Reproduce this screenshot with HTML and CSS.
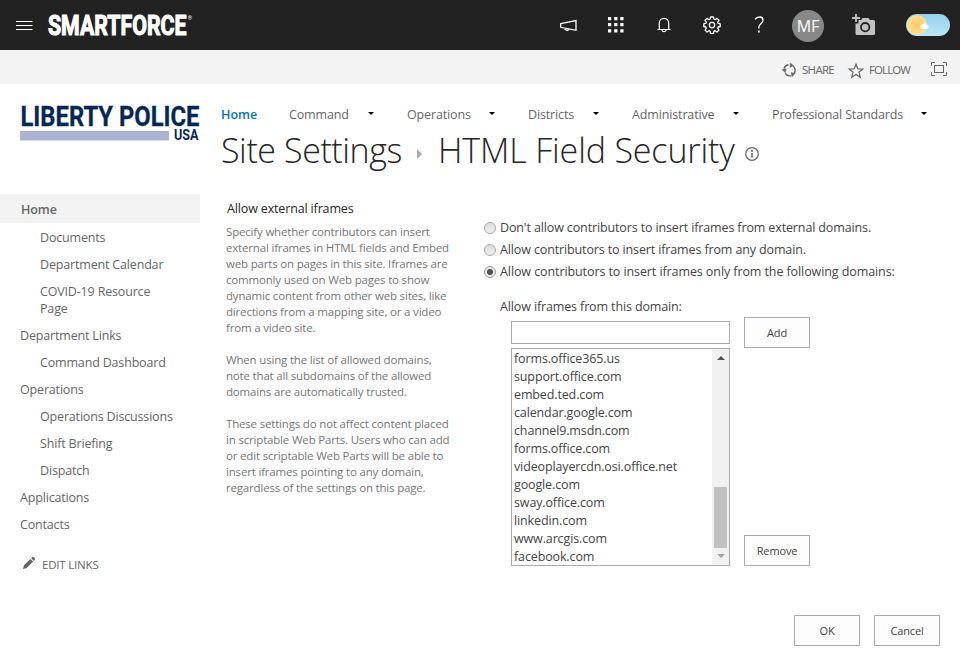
FILE: index.html
```html
<!DOCTYPE html>
<html lang="en">
<head>
<meta charset="utf-8">
<title>HTML Field Security</title>
<link rel="stylesheet" href="styles.css">
</head>
<body>
<header class="topbar">
  <svg class="menu" width="17" height="11" viewBox="0 0 17 11"><path d="M0 1.500h16.500M0 5.500h16.500M0 9.500h16.500" stroke="#fff"/></svg>
  <svg class="brand" width="146" height="26" viewBox="0 0 146 26"><text x="0" y="22" textLength="138.500" lengthAdjust="spacingAndGlyphs" class="brand-text">SMARTFORCE</text><text x="139.800" y="6.500" class="brand-mark">®</text></svg>
  <nav class="tools">
    <svg class="t-horn" width="18" height="14" viewBox="0 0 18 14" fill="none" stroke="#fff" stroke-width="1.300"><path d="M.700 4.700 16 1.500v9.800L.700 8.300zM4.500 9.200c.2 2.600 4.500 2.600 4.800.8"/></svg>
    <svg class="t-grid" width="16" height="16" viewBox="0 0 16 16" fill="#fff"><path d="M0 0h3.200v3.200H0zM6.200 0h3.200v3.200H6.200zM12.300 0h3.200v3.200h-3.200zM0 6h3.200v3.200H0zM6.200 6h3.200v3.200H6.200zM12.300 6h3.200v3.200h-3.200zM0 12.200h3.200v3.200H0zM6.200 12.200h3.200v3.200H6.200zM12.300 12.200h3.200v3.200h-3.200z"/></svg>
    <svg class="t-bell" width="14" height="16" viewBox="0 0 14 16" fill="none" stroke="#fff" stroke-width="1.200"><path d="M.5 12.500h13M2.300 12.500V6a4.700 4.700 0 0 1 9.400 0v6.500M5 13c.3 2.300 3.700 2.300 4 0"/></svg>
    <svg class="t-gear" width="18" height="18" viewBox="0 0 18 18" fill="none" stroke="#fff" stroke-width="1.300" stroke-linejoin="round"><path d="M7.500 1h3l.4 2.200 1.200.5L14 2.400 16 4.300l-1.300 1.900.5 1.200 2 .4v2.700l-2 .5-.5 1.200 1.200 1.900-1.900 1.900-1.900-1.300-1.200.5-.4 2.100h-3l-.4-2.100-1.200-.5-1.900 1.300-1.900-1.900 1.200-1.900-.5-1.200-2-.5V7.800l2-.4.500-1.200L2 4.300l2-1.900 1.900 1.300 1.200-.5z"/><circle cx="9" cy="9.100" r="2.700"/></svg>
    <svg class="t-help" width="12" height="18" viewBox="0 0 12 18" fill="none" stroke="#fff" stroke-width="1.400"><path d="M1 3.300C3.500.2 9 .1 9 4.200c0 3.600-4.200 3.600-4.200 7.300v1"/><path d="M4 15.500h1.700" stroke-width="1.800"/></svg>
    <span class="avatar">MF</span>
    <svg class="t-cam" width="24" height="23" viewBox="0 0 24 23"><path d="M3.500 9.500H6.500V6H9l1.700-2h5.600l1.700 2h3.500Q23 6 23 7.500v12Q23 21 21.500 21H5q-1.500 0-1.500-1.500z" fill="#c2c2c2"/><circle cx="13.200" cy="13.200" r="4.200" fill="none" stroke="#222" stroke-width="1.800"/><path d="M4 0v8M0 4h8" stroke="#c2c2c2" stroke-width="1.800"/></svg>
    <span class="weather">
      <svg width="44" height="22" viewBox="0 0 44 22"><defs><radialGradient id="sun"><stop offset="0" stop-color="#ffc65b"/><stop offset="1" stop-color="#ffe09a"/></radialGradient><linearGradient id="sky" x2="0" y2="1"><stop offset="0" stop-color="#93d1ef"/><stop offset="1" stop-color="#bce7f8"/></linearGradient></defs><rect width="44" height="22" rx="11" fill="url(#sky)"/><circle cx="11" cy="11" r="10" fill="url(#sun)"/><path d="M16 15a2 2 0 0 1-.3-3.900 3 3 0 0 1 5-.7 2.400 2.400 0 0 1 .3 4.600z" fill="#fff"/></svg>
    </span>
  </nav>
</header>
<div class="ribbon">
  <svg class="r-share" width="15" height="15" viewBox="0 0 15 15" fill="none" stroke="#666" stroke-width="1.400"><path d="M2 5.500A5.600 5.600 0 0 1 6.500 1.800M10.500 2.500a5.600 5.600 0 0 1 1.600 8M9.500 12.600A5.600 5.600 0 0 1 3.300 10.500"/><path d="M8.200 0 11.200 2.300 8.200 4.500zM9 9.500l4 1-2.800 3zM0 6.500l4-.7-.7 4z" fill="#666"  stroke-width=".5"/></svg>
  <span class="r-text share-label">SHARE</span>
  <svg class="r-star" width="16" height="16" viewBox="0 0 16 16" fill="none" stroke="#666" stroke-width="1.200"><path d="m8 1.200 1.900 4.600 5 .2-3.900 3.300 1.300 5L8 11.500l-4.300 2.800 1.300-5L1.100 6l5-.2z"/></svg>
  <span class="r-text follow-label">FOLLOW</span>
  <svg class="r-focus" width="16" height="14" viewBox="0 0 16 14" fill="none" stroke="#666"><path d="M.5 4V.5H4M12 .5h3.500V4M15.500 10v3.500H12M4 13.500H.5V10"/><rect x="3.500" y="3.500" width="9" height="7"/></svg>
</div>
<div class="page">
  <aside class="side">
    <svg class="logo" width="180" height="38" viewBox="0 0 180 38"><text x="0.500" y="21.500" textLength="179" lengthAdjust="spacingAndGlyphs" class="logo-main">LIBERTY POLICE</text><rect y="27" width="149" height="9.500" fill="#abb3d4"/><text x="154" y="36" textLength="24.500" lengthAdjust="spacingAndGlyphs" class="logo-sub">USA</text></svg>
    <ul class="links">
      <li class="current"><span>Home</span></li>
      <li class="sub"><span>Documents</span></li>
      <li class="sub"><span>Department Calendar</span></li>
      <li class="sub"><span>COVID-19 Resource<br>Page</span></li>
      <li><span>Department Links</span></li>
      <li class="sub"><span>Command Dashboard</span></li>
      <li><span>Operations</span></li>
      <li class="sub"><span>Operations Discussions</span></li>
      <li class="sub"><span>Shift Briefing</span></li>
      <li class="sub"><span>Dispatch</span></li>
      <li><span>Applications</span></li>
      <li><span>Contacts</span></li>
    </ul>
    <div class="edit"><svg width="12" height="12" viewBox="0 0 12 12" fill="#666"><path d="m0 12 1-3.700L7.400 2l2.700 2.600L3.700 11zM8.200 1.300 9.500 0q1.200-.3 2.300.9.500 1.200-.2 2L10.800 3.900z"/></svg><span>EDIT LINKS</span></div>
  </aside>
  <main class="content">
    <nav class="nav">
      <span class="active">Home</span>
      <span>Command<i></i></span>
      <span>Operations<i></i></span>
      <span>Districts<i></i></span>
      <span>Administrative<i></i></span>
      <span>Professional Standards<i></i></span>
    </nav>
    <h1 class="title"><span class="title-a">Site Settings</span><b class="crumb"></b><span class="title-b">HTML Field Security</span><svg width="14" height="14" viewBox="0 0 14 14" fill="none" stroke="#666"><circle cx="7" cy="7" r="6.300" stroke-width="1.200"/><path d="M7 6v4.500M7 3v2" stroke-width="1.600"/></svg></h1>
    <div class="form">
      <section class="about">
        <h2>Allow external iframes</h2>
        <p>Specify whether contributors can insert<br>external iframes in HTML fields and Embed<br>web parts on pages in this site. Iframes are<br>commonly used on Web pages to show<br>dynamic content from other web sites, like<br>directions from a mapping site, or a video<br>from a video site.</p>
        <p>When using the list of allowed domains,<br>note that all subdomains of the allowed<br>domains are automatically trusted.</p>
        <p>These settings do not affect content placed<br>in scriptable Web Parts. Users who can add<br>or edit scriptable Web Parts will be able to<br>insert iframes pointing to any domain,<br>regardless of the settings on this page.</p>
      </section>
      <section class="options">
        <div class="radio"><i></i><span>Don't allow contributors to insert iframes from external domains.</span></div>
        <div class="radio"><i></i><span>Allow contributors to insert iframes from any domain.</span></div>
        <div class="radio on"><i></i><span>Allow contributors to insert iframes only from the following domains:</span></div>
        <div class="label">Allow iframes from this domain:</div>
        <div class="picker">
          <div class="fields">
            <div class="input"></div>
            <div class="list">
              <ul>
                <li>forms.office365.us</li><li>support.office.com</li><li>embed.ted.com</li><li>calendar.google.com</li><li>channel9.msdn.com</li><li>forms.office.com</li><li>videoplayercdn.osi.office.net</li><li>google.com</li><li>sway.office.com</li><li>linkedin.com</li><li>www.arcgis.com</li><li>facebook.com</li>
              </ul>
              <div class="scroll"><b class="up"></b><b class="thumb"></b><b class="down"></b></div>
            </div>
          </div>
          <div class="actions"><div class="btn">Add</div><div class="btn">Remove</div></div>
        </div>
      </section>
    </div>
    <div class="footer"><div class="btn">OK</div><div class="btn">Cancel</div></div>
  </main>
</div>
</body>
</html>
```
FILE: styles.css
```css
* { box-sizing: border-box; }
body { margin: 0; width: 960px; height: 672px; overflow: hidden; background: #fff; color: #444; font: 12.5px/18px "Open Sans", "Noto Sans", sans-serif; }
ul, h1, h2, p { margin: 0; padding: 0; list-style: none; font-weight: 400; }
svg { display: block; flex: none; overflow: visible; }
.topbar { height: 50px; background: #222; display: flex; align-items: flex-start; padding-left: 16px; }
.menu { margin-top: 20px; }
.brand { margin: 13px 0 0 15px; }
.brand-text { font: 700 27.5px Roboto, sans-serif; fill: #fff; stroke: #fff; stroke-width: 1.1px; }
.brand-mark { font: 5.5px Roboto, sans-serif; fill: #fff; }
.tools { display: flex; margin-left: 366px; }
.t-horn { margin-top: 19px; }
.t-grid { margin: 17px 0 0 30px; }
.t-bell { margin: 17px 0 0 33px; }
.t-gear { margin: 16px 0 0 32px; }
.t-help { margin: 16px 0 0 33px; }
.avatar { margin: 10px 0 0 26px; width: 32px; height: 32px; border-radius: 50%; background: #888; color: #fff; font-size: 16px; line-height: 33px; text-align: center; flex: none; }
.t-cam { margin: 14px 0 0 28px; }
.weather { margin: 14px 0 0 30px; }
.ribbon { height: 34px; background: #f3f3f3; display: flex; padding-left: 782px; color: #666; }
.r-text { font-size: 11.5px; line-height: 18px; margin-top: 11px; white-space: nowrap; letter-spacing: -.7px; }
.r-share { margin: 13px 5px 0 0; }
.share-label { width: 32px; }
.r-star { margin: 13px 5px 0 14px; }
.follow-label { width: 41px; letter-spacing: -.9px; }
.r-focus { margin: 12px 0 0 21px; }
.page { display: flex; height: 588px; }
.side { width: 200px; flex: none; color: #666; }
.logo { margin: 20px 0 52px 20px; }
.logo-main { font: 700 27px Roboto, sans-serif; fill: #032856; stroke: #032856; stroke-width: .3px; }
.logo-sub { font: 700 14px Roboto, sans-serif; fill: #032856; }
.links li { padding: 6px 0 4px 20px; line-height: 17px; white-space: nowrap; letter-spacing: -.17px; }
.links .sub { padding-left: 40px; }
.links .current { height: 29px; padding: 7px 0 5px 21px; background: #f3f3f3; font-weight: 600; letter-spacing: -.1px; }
.edit { display: flex; margin: 19px 0 0 23px; gap: 7px; font-size: 11.5px; letter-spacing: -.2px; }
.edit svg { margin-top: 1px; }
.content { width: 760px; padding-left: 21px; }
.nav { display: grid; grid-template-columns: 68px 118px 121px 104px 140px 180px; height: 45px; padding-top: 22px; color: #666; white-space: nowrap; letter-spacing: -.14px; }
.nav span { display: flex; }
.nav .active { color: #0072c6; font-weight: 600; letter-spacing: 0; }
.nav i { width: 6px; height: 3px; margin: 6px 33px 0 auto; border: 3px solid transparent; border-top-color: #000; border-bottom: 0; }
.nav span:last-child i { margin-right: 25px; }
.title { display: flex; height: 44px; color: #262626; font-size: 34px; font-weight: 300; line-height: 42px; white-space: nowrap; }
.title-a { width: 196px; letter-spacing: -.42px; }
.crumb { margin-top: 20px; width: 5px; height: 10px; border: 5px solid transparent; border-left-color: #aaa; border-right: 0; }
.title-b { width: 297px; margin-left: 16px; letter-spacing: -.15px; }
.title svg { margin: 18px 0 0 10px; }
.form { display: flex; padding: 27px 0 0 5px; }
.about { width: 258px; color: #777; font-size: 11.5px; line-height: 16px; white-space: nowrap; letter-spacing: -.18px; }
.about h2 { padding-left: 1px; color: #262626; font-size: 12.5px; line-height: 18px; margin-bottom: 6px; letter-spacing: -.15px; }
.about p + p { margin-top: 16px; }
.options { width: 460px; padding-top: 17px; letter-spacing: -.13px; }
.radio { display: flex; height: 22px; line-height: 22px; white-space: nowrap; }
.radio i { width: 12px; height: 12px; margin: 5px 4px 0 0; border: 1px solid #aaa; border-radius: 50%; background: linear-gradient(#ddd, #eee); }
.radio.on { letter-spacing: -.09px; }
.radio.on i { background: radial-gradient(circle, #555 0 2.700px, #eaeaea 3.400px); border-color: #999; }
.label { margin: 14px 0 0 16px; height: 25px; line-height: 20px; }
.picker { display: flex; margin-left: 27px; }
.fields { width: 219px; }
.input { height: 23px; border: 1px solid #ababab; margin-top: -1px; }
.list { display: flex; justify-content: space-between; height: 218px; margin-top: 4px; border: 1px solid #ababab; }
.list ul { padding-top: 1px; height: 216px; overflow: hidden; }
.list li { height: 18px; line-height: 18px; padding-left: 2px; white-space: nowrap; }
.scroll { width: 17px; height: 216px; background: #f1f1f1; display: flex; flex-direction: column; align-items: center; }
.up { margin-top: 7px; border: 4px solid transparent; border-bottom-color: #505050; border-top: 0; }
.thumb { margin-top: 127px; width: 13px; height: 61px; background: #c1c1c1; }
.down { margin-top: 6px; border: 4px solid transparent; border-top-color: #a3a3a3; border-bottom: 0; }
.actions { margin: -5px 0 0 14px; display: flex; flex-direction: column; justify-content: space-between; }
.btn { width: 66px; height: 31px; border: 1px solid #ababab; background: #fdfdfd; font-size: 11px; line-height: 30px; text-align: center; letter-spacing: -.15px; }
.footer { display: flex; gap: 14px; margin: 49px 20px 0 0; justify-content: flex-end; }
```
